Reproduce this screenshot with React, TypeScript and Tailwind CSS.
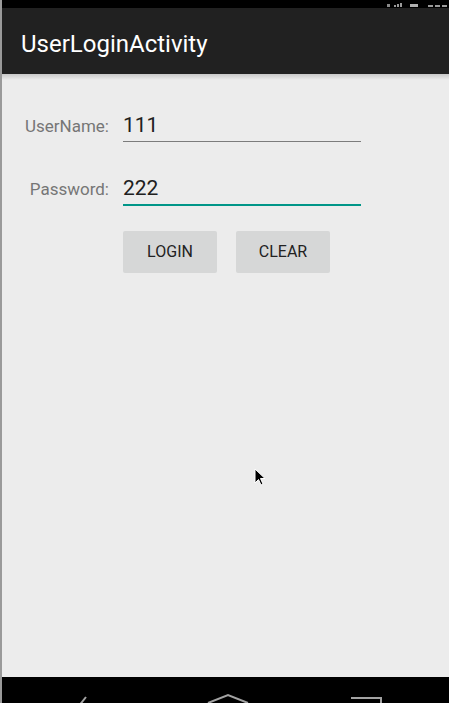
import React from 'react';

const font = { fontFamily: 'Roboto, "Noto Sans", sans-serif' };

function StatusBar() {
  return (
    <div className="relative h-[8px] bg-black overflow-hidden shrink-0">
      {/* status icons, cut off by the frame */}
      <div className="absolute right-0 bottom-[1px] flex items-end gap-[4px] pr-[2px]">
        <div className="w-[3px] h-[3px] bg-[#8a8a8a]" />
        <div className="flex items-end gap-[1px]">
          <div className="w-[2px] h-[2px] bg-[#9a9a9a]" />
          <div className="w-[2px] h-[3px] bg-[#9a9a9a]" />
          <div className="w-[2px] h-[4px] bg-[#9a9a9a]" />
        </div>
        <div className="w-[8px] h-[3px] bg-[#b0b0b0] ml-[4px]" />
        <div className="flex gap-[2px] ml-[6px]">
          <div className="w-[5px] h-[2px] bg-[#9a9a9a]" />
          <div className="w-[5px] h-[2px] bg-[#9a9a9a]" />
          <div className="w-[5px] h-[2px] bg-[#9a9a9a]" />
        </div>
      </div>
    </div>
  );
}

function Field({ label, value, focused }: { label: string; value: string; focused?: boolean }) {
  return (
    <div className="flex items-baseline">
      <div className="w-[107px] text-right text-[17px] text-[#767676] leading-none">{label}</div>
      <div className="ml-[14px] w-[238px]">
        <div className="text-[21px] text-[#202020] leading-none pb-[5px]">{value}</div>
        <div className={focused ? 'h-[2px] bg-[#009688]' : 'h-px bg-[#7c7c7c]'} />
      </div>
    </div>
  );
}

function NavBar() {
  return (
    <div className="h-[26px] bg-black relative overflow-hidden shrink-0">
      <svg width="447" height="26" className="absolute left-0 top-0">
        <g stroke="#a3a3a3" strokeWidth="2" fill="none">
          <path d="M84 20 L76 30" />
          <path d="M206 26 L226 18 L246 26" />
          <path d="M349 21 H379 V30" />
        </g>
      </svg>
    </div>
  );
}

export default function App() {
  return (
    <div className="w-[449px] h-[703px] flex bg-[#ececec] overflow-hidden" style={font}>
      <div className="w-[2px] bg-[#9a9a9a] shrink-0" />
      <div className="flex-1 flex flex-col">
        <StatusBar />
        <div className="h-[66px] bg-[#212121] pl-[19px] pt-[24px] shrink-0">
          <div className="text-[24px] text-white leading-none">UserLoginActivity</div>
        </div>
        <div className="h-[6px] bg-gradient-to-b from-[#c8c8c8] to-[#ececec] shrink-0" />
        <div className="flex-1 relative">
          <div className="flex flex-col pt-[35px]">
            <Field label="UserName:" value="111" />
            <div className="h-[36px]" />
            <Field label="Password:" value="222" focused />
            <div className="flex gap-[19px] ml-[121px] mt-[25px]">
              <div className="w-[94px] h-[42px] rounded-[2px] bg-[#d6d7d7] flex items-center justify-center text-[16px] text-[#222]">LOGIN</div>
              <div className="w-[94px] h-[42px] rounded-[2px] bg-[#d6d7d7] flex items-center justify-center text-[16px] text-[#222]">CLEAR</div>
            </div>
          </div>
          {/* mouse pointer */}
          <svg width="14" height="20" viewBox="0 0 14 20" className="absolute left-[252px] top-[388px]">
            <path d="M1 1 L1 15 L4.5 11.5 L7 17 L9 16 L6.5 10.5 L11 10.5 Z" fill="#000" stroke="#fff" strokeWidth="1" />
          </svg>
        </div>
        <NavBar />
      </div>
    </div>
  );
}
